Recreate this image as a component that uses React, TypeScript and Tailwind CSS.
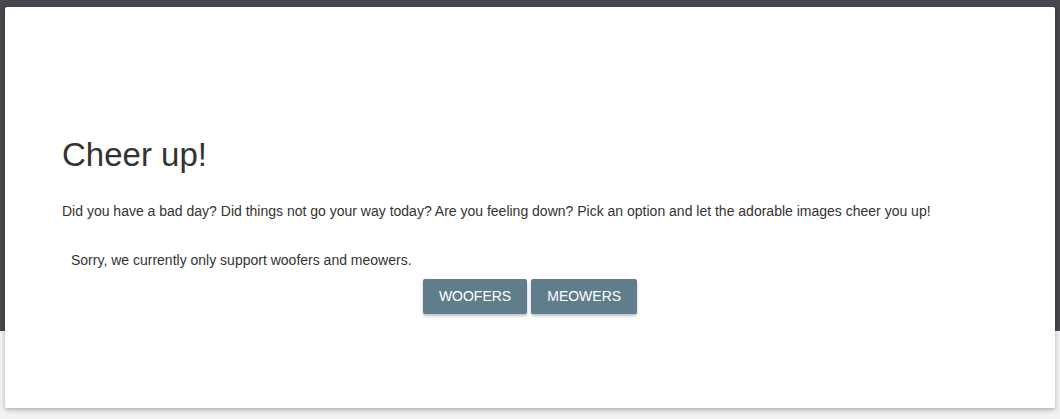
export default function App() {
  return (
    <div className="min-h-[419px] w-full bg-[linear-gradient(#47474d_331px,#f2f2f2_331px)] px-[5px] pt-[7px] font-['Liberation_Sans',Arial,sans-serif] text-[#333]">
      <div className="flex h-[401px] flex-col rounded-[2px] bg-white pl-[57px] pr-[57px] pt-[130px] shadow-[0_2px_5px_0_rgba(0,0,0,0.28)]">
        <h1 className="text-[33px] leading-[1.1]">Cheer up!</h1>
        <p className="mt-[28px] text-[14px] leading-[20px]">
          Did you have a bad day? Did things not go your way today? Are you feeling down? Pick an option and let the
          adorable images cheer you up!
        </p>
        <p className="mt-[29px] pl-[9px] text-[14px] leading-[20px]">
          Sorry, we currently only support woofers and meowers.
        </p>
        <div className="mt-[9px] flex justify-center gap-[4px]">
          <button className="h-[35px] rounded-[2px] bg-[#607d8b] px-[16px] text-[14px] text-white shadow-[0_2px_3px_rgba(0,0,0,0.25)]">
            WOOFERS
          </button>
          <button className="h-[35px] rounded-[2px] bg-[#607d8b] px-[16px] text-[14px] text-white shadow-[0_2px_3px_rgba(0,0,0,0.25)]">
            MEOWERS
          </button>
        </div>
      </div>
    </div>
  );
}
